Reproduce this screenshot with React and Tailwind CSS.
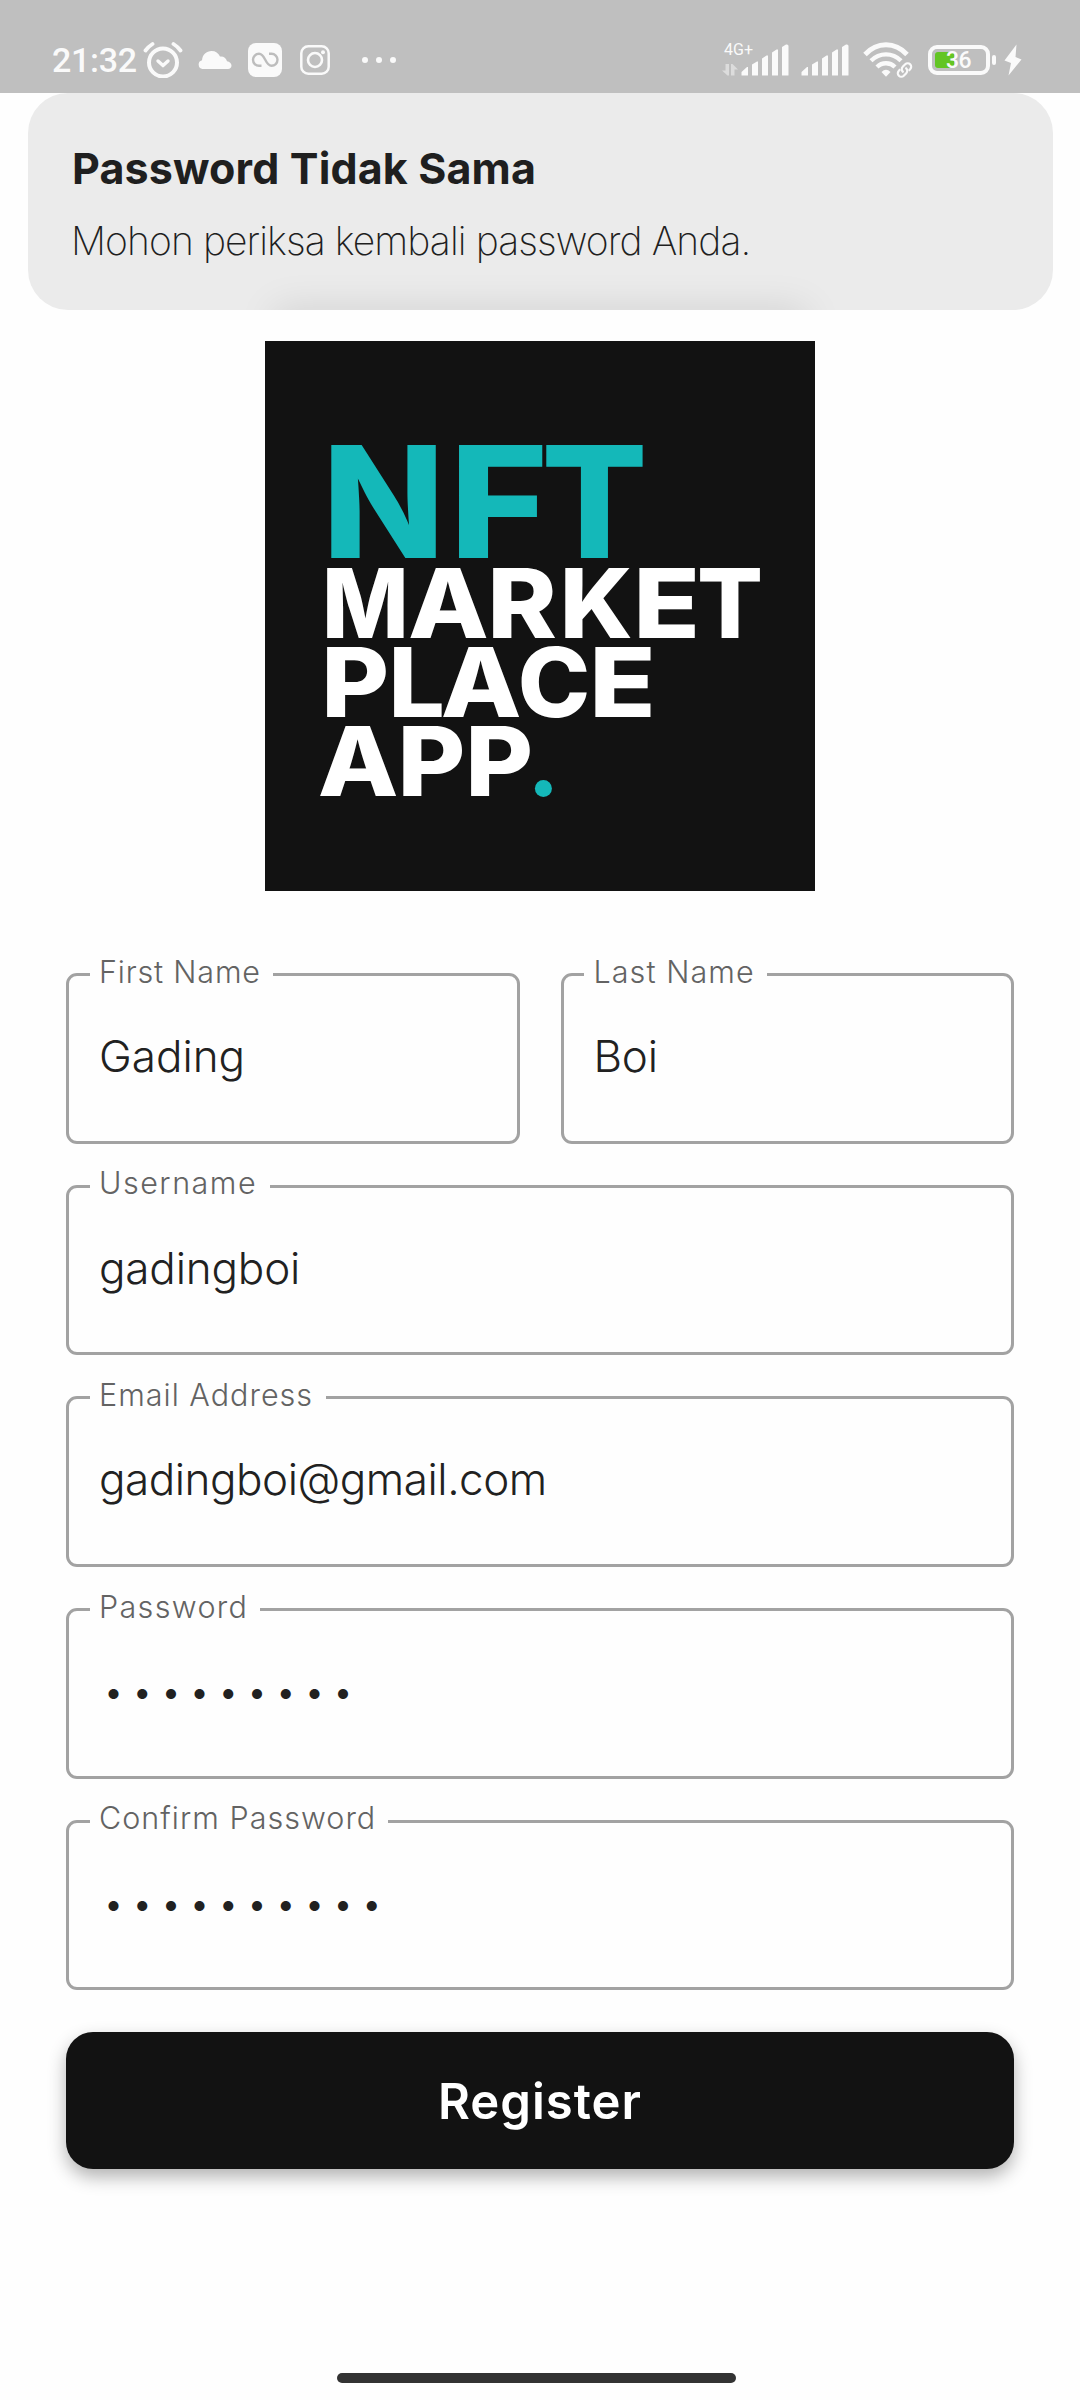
import React from "react";

/* Relative metrics of the heavy Inter capitals: advance, ink left, ink right. */
const GLYPHS = {
  N: [0.766, 0.055, 0.711],
  F: [0.585, 0.055, 0.556],
  T: [0.677, 0.03, 0.647],
  M: [0.943, 0.055, 0.888],
  A: [0.77, 0.018, 0.752],
  R: [0.662, 0.055, 0.644],
  K: [0.738, 0.055, 0.722],
  E: [0.61, 0.055, 0.566],
  P: [0.652, 0.055, 0.617],
  L: [0.565, 0.055, 0.537],
  C: [0.744, 0.038, 0.71],
};

/* One line of the logo; each letter is given as [char, left edge, width]. */
function LogoLine({ letters, size, y, fill }) {
  return (
    <text y={y} fontSize={size} fill={fill} className="font-['Inter',sans-serif] font-extrabold">
      {letters.map(([ch, left, width], i) => {
        const [adv, l, r] = GLYPHS[ch];
        const ratio = width / ((r - l) * size);
        return (
          <tspan key={i} x={left - l * size * ratio} textLength={adv * size * ratio} lengthAdjust="spacingAndGlyphs">
            {ch}
          </tspan>
        );
      })}
    </text>
  );
}

function Logo() {
  return (
    <svg viewBox="0 0 550 550" className="size-[550px] bg-[#121212]" role="img" aria-label="NFT Marketplace App">
      <LogoLine y={217} size={155.4} fill="#14b8b9" letters={[["N", 66, 105], ["F", 193.7, 84.4], ["T", 281, 97]]} />
      <LogoLine
        y={296.6}
        size={95.6}
        fill="#fff"
        letters={[["M", 62, 76.6], ["A", 144.8, 77], ["R", 228, 62], ["K", 300.2, 66], ["E", 374.2, 56], ["T", 434.9, 60.2]]}
      />
      <LogoLine
        y={375.5}
        size={95.6}
        fill="#fff"
        letters={[["P", 62, 58.5], ["L", 128.9, 48], ["A", 177.7, 77], ["C", 256.5, 65.5], ["E", 330.2, 55.7]]}
      />
      <LogoLine y={454.8} size={95.6} fill="#fff" letters={[["A", 54.6, 77], ["P", 138.2, 58.5], ["P", 205.9, 58.5]]} />
      <circle cx="278.4" cy="447.5" r="8.5" fill="#14b8b9" />
    </svg>
  );
}

function AlarmIcon() {
  return (
    <svg viewBox="0 0 40 36" className="h-9 w-10" fill="none" stroke="#fafafa" strokeLinecap="round">
      <circle cx="20" cy="20.5" r="14" strokeWidth="4" />
      <path d="M2.5 8.5Q5.5 4.5 9.5 2M37.5 8.5Q34.5 4.5 30.5 2" strokeWidth="3.8" />
      <path d="M15 19l5 4.600 5-4.600" strokeWidth="3.4" strokeLinejoin="round" />
    </svg>
  );
}

function CloudIcon() {
  return (
    <svg viewBox="0 0 34 20" className="h-5 w-[34px]" fill="#fafafa">
      <path d="M4.500 19A4.500 4.500 0 0 1 4 10.200C4.500 4.500 8.500 1 13.500 1c4 0 7 2 8.500 5.500 3.500-.5 6 1.500 7 4.700 2.500.3 4.500 2 4.500 4.300 0 2-1.500 3.500-3.500 3.500z" />
    </svg>
  );
}

function LoopIcon() {
  return (
    <svg viewBox="0 0 34 34" className="size-[34px]" fill="none">
      <rect width="34" height="34" rx="8" fill="#fafafa" />
      <path
        d="M13.500 22.800H11A6 6 0 0 1 11 10.800C17.500 10.800 17 22.800 23.500 22.800A6 6 0 0 0 23.500 10.800H21"
        stroke="#bdbdbd"
        strokeWidth="2.4"
      />
    </svg>
  );
}

function CameraIcon() {
  return (
    <svg viewBox="0 0 30 30" className="size-[30px]" fill="none" stroke="#fafafa">
      <rect x="1.3" y="1.3" width="27.4" height="27.4" rx="7" strokeWidth="2.5" />
      <circle cx="15" cy="15" r="7" strokeWidth="2.6" />
      <circle cx="23" cy="7.2" r="2" fill="#fafafa" stroke="none" />
    </svg>
  );
}

function MoreIcon() {
  return (
    <svg viewBox="0 0 34 6" className="h-1.5 w-[34px]" fill="#fafafa">
      <circle cx="3" cy="3" r="3" />
      <circle cx="17" cy="3" r="3" />
      <circle cx="31" cy="3" r="3" />
    </svg>
  );
}

function SignalBars() {
  return (
    <svg viewBox="0 0 48 32" className="h-8 w-12" fill="#fafafa">
      <path d="M0.500 31V28L6 23h1v8q0 .5-.5.5H1Q.5 31.500.500 31zM11 31V20.500L16 17.500h1V31q0 .5-.5.500H11.500Q11 31.500 11 31zM21 31V14.500L25.500 11.500h1.500V31q0 .5-.5.500H21.500Q21 31.500 21 31zM31 31V8.500L35.500 5.500h1.500V31q0 .5-.5.500H31.500Q31 31.500 31 31zM41 31V3L45 .5Q47.500 0 47.500 2V31q0 .5-.5.500H41.500Q41 31.500 41 31z" />
    </svg>
  );
}

function DataArrows() {
  return (
    <svg viewBox="0 0 16 12" className="h-3 w-4" fill="#dcdcdc">
      <path d="M7 0v11.500H5.500L0 6.500h3.500V0zM9 11.500V0h1.500L16 5.500h-3.500v6z" />
    </svg>
  );
}

function WifiLinkIcon() {
  return (
    <svg viewBox="0 0 50 36" className="h-9 w-[50px]" fill="none" stroke="#fafafa">
      <path d="M2 12.500C14-.500 32-.500 44 12.500" strokeWidth="4.8" />
      <path d="M8 18.800C16.500 10.300 29.500 10.300 38 18.800" strokeWidth="4.3" />
      <path d="M14 25C19 20 27 20 32 25" strokeWidth="4.3" />
      <path d="M18.500 30Q23 25.500 27.500 30L23 34.800z" fill="#fafafa" stroke="none" />
      {/* Two interlocked chain links along the diagonal */}
      <g strokeWidth="2.2" transform="translate(41.5 28) rotate(-45)">
        <path d="M-2.500-3.500H-4.500a3.500 3.500 0 0 0 0 7H-1a3.500 3.500 0 0 0 3.300-4.500" />
        <path d="M2.500 3.500H4.500a3.500 3.500 0 0 0 0-7H1a3.500 3.500 0 0 0-3.300 4.500" />
      </g>
    </svg>
  );
}

function Battery() {
  return (
    <div className="flex items-center gap-0.5">
      <div className="relative flex h-[30px] w-[62px] items-center rounded-[9px] border-4 border-[#fafafa] pl-[3px]">
        <div className="h-4 w-[19px] rounded-l-[3px] bg-[#63c524]" />
        <span className="absolute top-0 left-[14px] text-[23px] leading-[23px] font-medium tracking-[-0.5px] text-[#fafafa]">36</span>
      </div>
      <div className="h-2.5 w-1 rounded-full bg-[#fafafa]" />
    </div>
  );
}

function BoltIcon() {
  return (
    <svg viewBox="0 0 18 32" className="h-8 w-[18px]" fill="#fafafa">
      <path d="M12.500.5L.5 16.500l6.500 2.500-2.500 12.500L17.500 15.500l-6-2.500z" />
    </svg>
  );
}

function StatusBar() {
  return (
    <header className="flex h-[93px] items-start justify-between bg-[#bfbfbf] pt-[42px] pr-[58px] pl-[52px] font-['Roboto',sans-serif]">
      <div className="flex h-9 items-center">
        <span className="w-[91px] text-[34px] leading-9 font-medium tracking-[-0.3px] text-[#fafafa]">21:32</span>
        <AlarmIcon />
        <div className="ml-[15px] flex"><CloudIcon /></div>
        <div className="ml-4 flex"><LoopIcon /></div>
        <div className="ml-[18px] flex"><CameraIcon /></div>
        <div className="ml-8 flex"><MoreIcon /></div>
      </div>
      <div className="flex h-9 items-center">
        <div className="relative flex h-full items-end pb-0.5">
          <span className="absolute top-0 left-0.5 text-[16px] leading-[15px] text-[#fafafa]">4G+</span>
          <DataArrows />
          <div className="ml-[3px] flex"><SignalBars /></div>
        </div>
        <div className="ml-3 flex h-full items-end pb-0.5"><SignalBars /></div>
        <div className="ml-3.5 flex"><WifiLinkIcon /></div>
        <div className="ml-[15px]"><Battery /></div>
        <div className="ml-2 flex"><BoltIcon /></div>
      </div>
    </header>
  );
}

function Notice() {
  return (
    <section className="relative mr-[27px] ml-[27.5px] h-[217px] overflow-hidden rounded-[40px] bg-[#ebebeb] pt-[45px] pl-[43.5px] text-[#1f1f1f]">
      <h1 className="ml-px text-[43px] leading-[60px] font-bold tracking-[0.14px] whitespace-nowrap">Password Tidak Sama</h1>
      <p className="mt-[18px] text-[39px] leading-[50px] font-extralight tracking-[-0.92px] whitespace-nowrap">
        Mohon periksa kembali password Anda.
      </p>
      <div className="absolute inset-x-[248px] top-full h-10 shadow-[0_0_38px_2px_rgba(0,0,0,0.10)]" />
    </section>
  );
}

function Field({ label, labelClass, value, valueClass }) {
  return (
    <div className="relative h-[170.7px] rounded-[11px] border-3 border-[#a2a2a2] pt-[52px]">
      <span
        className={`absolute -top-[22.4px] left-[20.5px] bg-[#fefefe] pl-[9.5px] text-[30.5px] leading-9 font-light whitespace-nowrap text-[#636363] ${labelClass}`}
      >
        {label}
      </span>
      <div className={`leading-[56px] whitespace-nowrap text-[#212121] ${valueClass}`}>{value}</div>
    </div>
  );
}

export default function App() {
  return (
    <div className="flex h-[2400px] w-[1080px] flex-col bg-[#fefefe] font-['Inter',sans-serif]">
      <StatusBar />
      <Notice />
      <div className="mt-[31px] flex justify-center">
        <Logo />
      </div>
      <form className="mx-[66px] mt-[82px] flex flex-col gap-[41px]">
        <div className="grid grid-cols-2 gap-[41px]">
          <Field label="First Name" labelClass="w-[183px] tracking-[0.82px]" value="Gading" valueClass="pl-[30px] text-[44px] font-light" />
          <Field label="Last Name" labelClass="w-[183px] tracking-[1.06px]" value="Boi" valueClass="pl-[30px] text-[44px] font-light tracking-[-0.2px]" />
        </div>
        <Field label="Username" labelClass="w-[180px] tracking-[1.5px]" value="gadingboi" valueClass="pl-[30px] text-[44px] font-light tracking-[-0.17px]" />
        <Field label="Email Address" labelClass="w-[236px] tracking-[1px]" value="gadingboi@gmail.com" valueClass="pl-[30px] text-[44px] font-light tracking-[-0.46px]" />
        <Field label="Password" labelClass="w-[170px] tracking-[1.34px]" value="•••••••••" valueClass="pl-[35.5px] pt-px text-[32px] tracking-[10.7px]" />
        <Field label="Confirm Password" labelClass="w-[298px] tracking-[1.02px]" value="••••••••••" valueClass="pl-[35.5px] pt-px text-[32px] tracking-[10.7px]" />
        <button
          type="button"
          className="mt-px h-[137px] rounded-[27px] bg-[#121212] pt-px text-[49px] font-semibold tracking-[1px] text-white shadow-[0_8px_18px_rgba(0,0,0,0.30)]"
        >
          Register
        </button>
      </form>
      <div className="mt-auto mb-[17px] ml-[337px] h-2.5 w-[399px] rounded-full bg-[#333]" />
    </div>
  );
}
